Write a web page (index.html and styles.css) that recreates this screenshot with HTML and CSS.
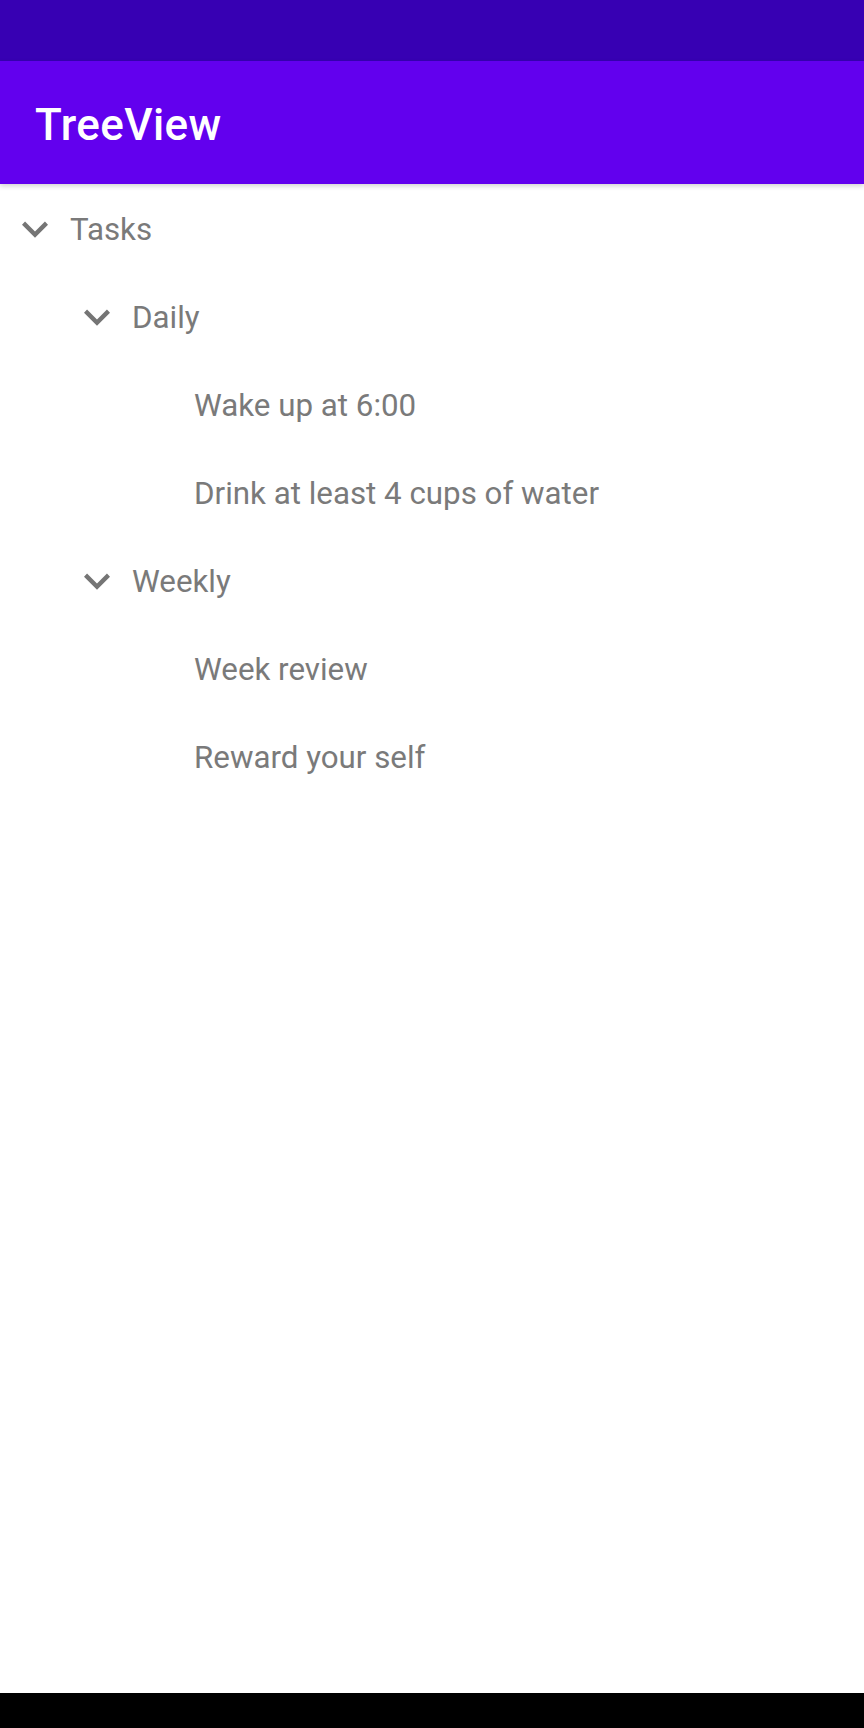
FILE: index.html
```html
<!DOCTYPE html>
<html>
<head>
<meta charset="utf-8">
<link rel="stylesheet" href="styles.css">
</head>
<body>
<div class="screen">
  <div class="status-bar"></div>
  <header class="app-bar"><h1 class="title">TreeView</h1></header>
  <main class="tree">
    <div class="row level-0">
      <svg class="chev" viewBox="0 0 24 24"><path d="M16.59 8.59L12 13.17 7.41 8.59 6 10l6 6 6-6z"/></svg>
      <span class="label">Tasks</span>
    </div>
    <div class="row level-1">
      <svg class="chev" viewBox="0 0 24 24"><path d="M16.59 8.59L12 13.17 7.41 8.59 6 10l6 6 6-6z"/></svg>
      <span class="label">Daily</span>
    </div>
    <div class="row level-2">
      <span class="chev"></span>
      <span class="label">Wake up at 6:00</span>
    </div>
    <div class="row level-2">
      <span class="chev"></span>
      <span class="label">Drink at least 4 cups of water</span>
    </div>
    <div class="row level-1">
      <svg class="chev" viewBox="0 0 24 24"><path d="M16.59 8.59L12 13.17 7.41 8.59 6 10l6 6 6-6z"/></svg>
      <span class="label">Weekly</span>
    </div>
    <div class="row level-2">
      <span class="chev"></span>
      <span class="label">Week review</span>
    </div>
    <div class="row level-2">
      <span class="chev"></span>
      <span class="label">Reward your self</span>
    </div>
  </main>
  <div class="nav-bar"></div>
</div>
</body>
</html>
```
FILE: styles.css
```css
html, body {
  margin: 0;
  padding: 0;
  background: #ffffff;
}
.screen {
  width: 864px;
  height: 1728px;
  display: flex;
  flex-direction: column;
  font-family: Roboto, "Liberation Sans", sans-serif;
  overflow: hidden;
}
.status-bar {
  height: 61px;
  background: #3700b3;
  flex: none;
}
.app-bar {
  height: 123px;
  background: #6200ee;
  flex: none;
  display: flex;
  align-items: center;
  padding-left: 35px;
  box-shadow: 0 2px 5px rgba(0,0,0,0.18);
  position: relative;
  z-index: 1;
}
.title {
  margin: 0;
  color: #ffffff;
  font-size: 44px;
  font-weight: 500;
  letter-spacing: 0.4px;
  padding-top: 5px;
}
.tree {
  flex: 1;
  padding-top: 2px;
}
.row {
  height: 88px;
  display: flex;
  align-items: center;
  gap: 9px;
}
.level-0 { padding-left: 9px; }
.level-1 { padding-left: 71px; }
.level-2 { padding-left: 133px; }
.chev {
  width: 52px;
  height: 52px;
  flex: none;
  fill: #757575;
  margin-top: -3px;
}
.label {
  color: #7a7a7a;
  font-size: 31.3px;
  margin-top: -1px;
}
.nav-bar {
  height: 35px;
  background: #000000;
  flex: none;
}
```
